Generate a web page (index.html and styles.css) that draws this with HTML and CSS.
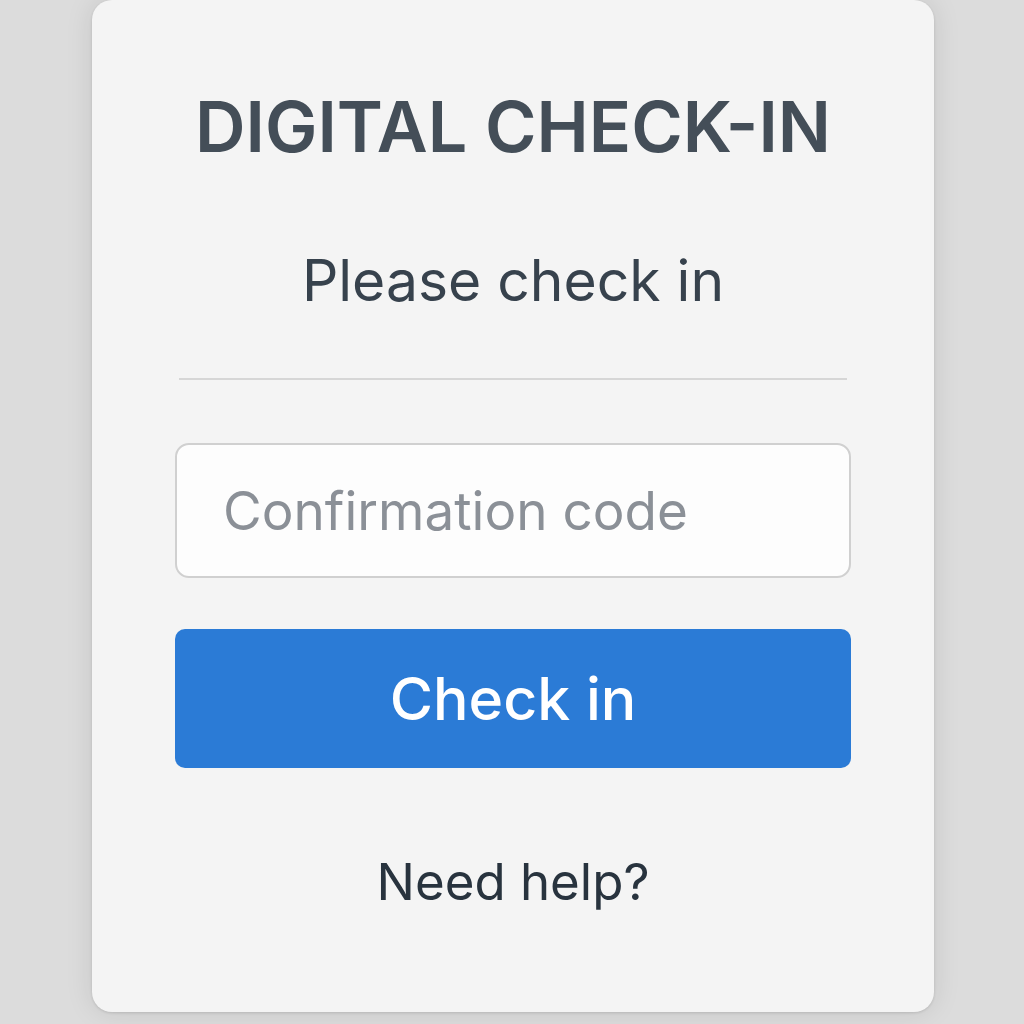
FILE: index.html
```html
<!DOCTYPE html>
<html lang="en">
<head>
<meta charset="utf-8">
<title>Digital Check-In</title>
<link rel="stylesheet" href="styles.css">
</head>
<body>
<main class="card">
  <h1 class="title">DIGITAL CHECK-IN</h1>
  <p class="subtitle">Please check in</p>
  <hr class="divider">
  <input class="code-input" type="text" placeholder="Confirmation code">
  <button class="checkin-btn" type="button">Check in</button>
  <a class="help" href="#">Need help?</a>
</main>
</body>
</html>
```

FILE: styles.css
```css
html, body {
  margin: 0;
  padding: 0;
}
body {
  background: #dcdcdc;
  font-family: Inter, "Liberation Sans", sans-serif;
  height: 1024px;
  overflow: hidden;
}
.card {
  box-sizing: border-box;
  width: 842px;
  height: 1012px;
  margin: 0 0 0 92px;
  background: #f4f4f4;
  border-radius: 20px;
  box-shadow: 0 0 28px rgba(0, 0, 0, 0.10), 0 1px 3px rgba(0, 0, 0, 0.12);
  padding: 85px 83px 0 83px;
  display: flex;
  flex-direction: column;
  align-items: stretch;
}
.title {
  margin: 0;
  font-size: 70px;
  line-height: 1.2;
  font-weight: 600;
  color: #444e58;
  text-align: center;
}
.subtitle {
  margin: 78px 0 0;
  font-size: 57px;
  line-height: 1.2;
  font-weight: 400;
  color: #37424d;
  text-align: center;
}
.divider {
  margin: 63px 4px 0;
  border: 0;
  height: 2px;
  background: #d6d6d6;
}
.code-input {
  margin-top: 63px;
  box-sizing: border-box;
  height: 135px;
  width: 100%;
  border: 2px solid #d0d0d0;
  border-radius: 14px;
  background: #fdfdfd;
  padding: 0 0 0 46px;
  font-family: inherit;
  font-size: 53px;
  color: #37424d;
  outline: none;
}
.code-input::placeholder {
  color: #8b9097;
}
.checkin-btn {
  margin-top: 51px;
  height: 139px;
  width: 100%;
  border: 0;
  border-radius: 10px;
  background: #2b7bd6;
  color: #ffffff;
  font-family: inherit;
  font-size: 59px;
  font-weight: 500;
  cursor: pointer;
}
.help {
  margin-top: 83px;
  font-size: 51px;
  line-height: 1.2;
  color: #28333e;
  text-decoration: none;
  text-align: center;
}
```
